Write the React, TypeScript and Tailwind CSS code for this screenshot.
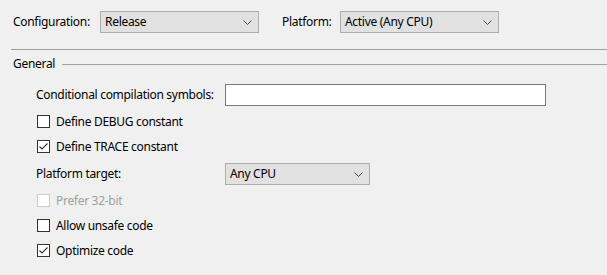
import { ReactNode } from 'react'

// Build properties page (Visual Studio style)

function Chevron() {
  return (
    <svg width="9" height="5" viewBox="0 0 9 5" className="shrink-0">
      <path d="M0.5 0.5 L4.5 4.5 L8.5 0.5" fill="none" stroke="#444" strokeWidth="1" />
    </svg>
  )
}

function Combo({ value, width }: { value: string; width: string }) {
  return (
    <div className={`flex h-[22px] ${width} items-center justify-between border border-[#adadad] bg-[#e1e1e1] pl-[4px] pr-[6px]`}>
      <span>{value}</span>
      <Chevron />
    </div>
  )
}

function Check({ label, checked, disabled }: { label: string; checked?: boolean; disabled?: boolean }) {
  return (
    <div className="flex h-[25px] items-center">
      <div
        className={`ml-[1px] flex h-[13px] w-[13px] items-center justify-center border bg-white ${
          disabled ? 'border-[#cccccc]' : 'border-[#333333]'
        }`}
      >
        {checked && (
          <svg width="11" height="11" viewBox="0 0 11 11">
            <path d="M1.5 5.5 L4 8 L9.5 2.5" fill="none" stroke="#333" strokeWidth="1.1" />
          </svg>
        )}
      </div>
      <span className={`ml-[6px] ${disabled ? 'text-[#a0a0a0]' : ''}`}>{label}</span>
    </div>
  )
}

function Row({ label, children }: { label: string; children: ReactNode }) {
  return (
    <div className="flex items-center">
      <span className="w-[189px]">{label}</span>
      {children}
    </div>
  )
}

export default function App() {
  return (
    <div
      className="h-[275px] w-[607px] overflow-hidden bg-[#f0f0f0] text-[12px] tracking-[-0.3px] text-black"
      style={{ fontFamily: '"Noto Sans", "Open Sans", sans-serif' }}
    >
      {/* configuration bar */}
      <div className="flex h-[49px] items-start pl-[13px] pt-[11px]">
        <div className="flex items-center">
          <span className="w-[87px]">Configuration:</span>
          <Combo value="Release" width="w-[159px]" />
          <span className="ml-[23px] w-[58px]">Platform:</span>
          <Combo value="Active (Any CPU)" width="w-[159px]" />
        </div>
      </div>

      <div className="ml-[11px] h-px bg-[#a0a0a0]" />

      {/* General group */}
      <div className="mt-[6px] flex h-[16px] items-center pl-[13px]">
        <span>General</span>
        <div className="ml-[7px] h-px flex-1 bg-[#a0a0a0]" />
      </div>

      <div className="mt-[12px] pl-[36px]">
        <Row label="Conditional compilation symbols:">
          <div className="h-[22px] w-[321px] border border-[#7a7a7a] bg-white" />
        </Row>
        <div className="mt-[3px]">
          <Check label="Define DEBUG constant" />
          <Check label="Define TRACE constant" checked />
        </div>
        <div className="mt-[4px]">
          <Row label="Platform target:">
            <Combo value="Any CPU" width="w-[145px]" />
          </Row>
        </div>
        <div className="mt-[3px]">
          <Check label="Prefer 32-bit" disabled />
          <Check label="Allow unsafe code" />
          <Check label="Optimize code" checked />
        </div>
      </div>
    </div>
  )
}
